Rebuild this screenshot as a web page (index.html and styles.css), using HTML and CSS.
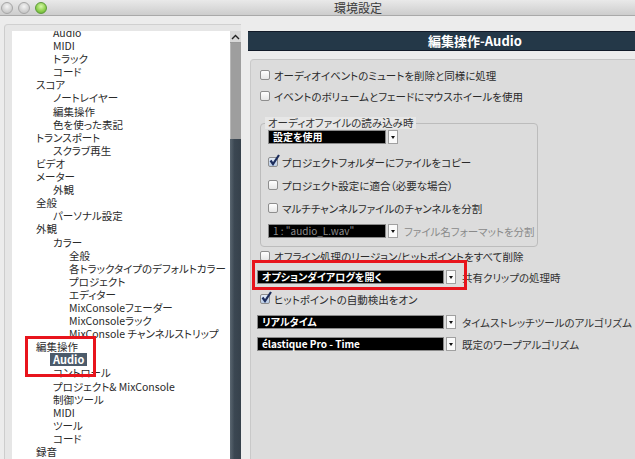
FILE: index.html
```html
<!DOCTYPE html>
<html lang="ja">
<head>
  <meta charset="UTF-8">
  <title>環境設定</title>
  <link rel="stylesheet" href="styles.css">
</head>
<body>

  <div class="window">
    <div class="titlebar">
      <div class="lights">
        <span class="light"></span>
        <span class="light"></span>
        <span class="light green"></span>
      </div>
      <div class="title">環境設定</div>
    </div>

    <div class="main">
      <div class="side">
        <ul class="tree">
          <li class="l1">Audio</li>
          <li class="l1">MIDI</li>
          <li class="l1">トラック</li>
          <li class="l1">コード</li>
          <li class="l0">スコア</li>
          <li class="l1">ノートレイヤー</li>
          <li class="l1">編集操作</li>
          <li class="l1">色を使った表記</li>
          <li class="l0">トランスポート</li>
          <li class="l1">スクラブ再生</li>
          <li class="l0">ビデオ</li>
          <li class="l0">メーター</li>
          <li class="l1">外観</li>
          <li class="l0">全般</li>
          <li class="l1">パーソナル設定</li>
          <li class="l0">外観</li>
          <li class="l1">カラー</li>
          <li class="l2">全般</li>
          <li class="l2">各トラックタイプのデフォルトカラー</li>
          <li class="l2">プロジェクト</li>
          <li class="l2">エディター</li>
          <li class="l2">MixConsoleフェーダー</li>
          <li class="l2">MixConsoleラック</li>
          <li class="l2">MixConsole チャンネルストリップ</li>
          <li class="l0">編集操作</li>
          <li class="l1"><span class="selected">Audio</span></li>
          <li class="l1">コントロール</li>
          <li class="l1">プロジェクト&amp; MixConsole</li>
          <li class="l1">制御ツール</li>
          <li class="l1">MIDI</li>
          <li class="l1">ツール</li>
          <li class="l1">コード</li>
          <li class="l0">録音</li>
        </ul>
        <div class="scrollbar">
          <div class="sb-up">
            <svg width="9" height="6" viewBox="0 0 9 6"><path d="M1 5 L4.5 1.5 L8 5" fill="none" stroke="#222" stroke-width="1.4"/></svg>
          </div>
          <div class="sb-thumb"></div>
          <div class="sb-track"></div>
        </div>
      </div>

      <div class="pane">
        <div class="pane-header">編集操作-Audio</div>
        <div class="panel">
          <div class="row check-row r-first">
            <span class="cb"></span>オーディオイベントのミュートを削除と同様に処理
          </div>
          <div class="row check-row r-second">
            <span class="cb"></span>イベントのボリュームとフェードにマウスホイールを使用
          </div>

          <div class="group">
            <div class="group-title">オーディオファイルの読み込み時</div>
            <div class="row select-row g-select">
              <div class="select small">設定を使用</div>
              <div class="drop"></div>
            </div>
            <div class="row check-row g-check1">
              <span class="cb checked"><svg width="13" height="13" viewBox="0 0 13 13"><path d="M2.5 6.5 L5 10 L11 1" fill="none" stroke="#1c2d5c" stroke-width="2.2"/></svg></span>プロジェクトフォルダーにファイルをコピー
            </div>
            <div class="row check-row g-check">
              <span class="cb"></span>プロジェクト設定に適合（必要な場合）
            </div>
            <div class="row check-row g-check">
              <span class="cb"></span>マルチチャンネルファイルのチャンネルを分割
            </div>
            <div class="row select-row g-select2">
              <div class="select small disabled">1 : "audio_L.wav"</div>
              <div class="drop"></div>
              <span class="select-label disabled-label">ファイル名フォーマットを分割</span>
            </div>
          </div>

          <div class="row check-row r-offline">
            <span class="cb"></span>オフライン処理のリージョン/ヒットポイントをすべて削除
          </div>
          <div class="row select-row r-select">
            <div class="select">オプションダイアログを開く</div>
            <div class="drop"></div>
            <span class="select-label">共有クリップの処理時</span>
          </div>
          <div class="row check-row r-hit">
            <span class="cb checked"><svg width="13" height="13" viewBox="0 0 13 13"><path d="M2.5 6.5 L5 10 L11 1" fill="none" stroke="#1c2d5c" stroke-width="2.2"/></svg></span>ヒットポイントの自動検出をオン
          </div>
          <div class="row select-row r-select2">
            <div class="select">リアルタイム</div>
            <div class="drop"></div>
            <span class="select-label">タイムストレッチツールのアルゴリズム</span>
          </div>
          <div class="row select-row r-select3">
            <div class="select">élastique Pro - Time</div>
            <div class="drop"></div>
            <span class="select-label">既定のワープアルゴリズム</span>
          </div>
        </div>
      </div>
    </div>

    <!-- 注目箇所の赤枠 -->
    <div class="mark mark-tree"></div>
    <div class="mark mark-clip"></div>
  </div>

</body>
</html>
```

FILE: styles.css
```css
body {
  margin: 0;
  padding: 0;
  font-family: "Noto Sans CJK JP", "Noto Sans", sans-serif;
  font-feature-settings: "palt";
  font-size: 10.5px;
  color: #2a2a2a;
  background: #ececec;
  overflow: hidden;
}

.window {
  position: relative;
  width: 635px;
  height: 459px;
  display: flex;
  flex-direction: column;
  overflow: hidden;
}

.titlebar {
  height: 15px;
  flex-shrink: 0;
  display: flex;
  align-items: center;
  background: linear-gradient(to bottom, #e9e9e9, #cdcdcd);
  border-bottom: 1px solid #a9a9a9;
}

.lights {
  display: flex;
  gap: 5px;
  padding-left: 1px;
}

.light {
  width: 12px;
  height: 12px;
  border-radius: 50%;
  box-sizing: border-box;
  border: 1px solid #a6a6a6;
  background: radial-gradient(circle at 50% 35%, #f4f4f4 0%, #d0d0d0 60%, #bcbcbc 100%);
}

.light.green {
  border-color: #5d9a3a;
  background: radial-gradient(circle at 50% 35%, #d6f7a8 0%, #8fd14f 55%, #5ea62c 100%);
}

.title {
  margin-left: 287px;
  font-size: 12px;
  color: #3a3a3a;
  line-height: 15px;
}

.main {
  flex: 1;
  display: flex;
  min-height: 0;
}

.side {
  margin: 8px 0 0 4px;
  padding: 6px 0 0 7px;
  display: flex;
  border-top: 1px solid #d0d0d0;
  border-left: 1px solid #cdcdcd;
  border-radius: 4px 0 0 0;
  background: #e6e6e6;
}

.tree {
  list-style: none;
  margin: 0;
  padding: 0;
  width: 218px;
  background: #fff;
  overflow: hidden;
}

.tree li {
  height: 13.1px;
  line-height: 13.1px;
  white-space: nowrap;
}

.tree li:first-child {
  margin-top: -5px;
}

.tree .l0 { padding-left: 24px; }
.tree .l1 { padding-left: 41px; }
.tree .l2 { padding-left: 57px; }

.tree .selected {
  display: inline-block;
  margin-left: -3px;
  padding: 0 3px;
  line-height: 13px;
  background: #4c5b6b;
  color: #fff;
  font-weight: bold;
  font-size: 11px;
}

.scrollbar {
  width: 11px;
  display: flex;
  flex-direction: column;
}

.sb-up {
  height: 11px;
  display: flex;
  align-items: center;
  justify-content: center;
  background: #d8d8d8;
  border-bottom: 1px solid #9a9a9a;
}

.sb-thumb {
  height: 96px;
  background: #9e9e9e;
  border-left: 1px solid #b8b8b8;
}

.sb-track {
  flex: 1;
  background: linear-gradient(to right, #5a6670, #3b4752 40%, #36414b);
}

.pane {
  flex: 1;
  margin: 15px 0 0 7px;
  display: flex;
  flex-direction: column;
  min-width: 0;
}

.pane-header {
  height: 18px;
  line-height: 18px;
  padding-left: 180px;
  background: #243848;
  border-top: 1px solid #111a28;
  border-bottom: 1px solid #111a28;
  color: #fff;
  font-weight: bold;
  font-size: 13px;
  white-space: nowrap;
}

.panel {
  flex: 1;
  margin: 8px 0 0 2px;
  padding: 0 0 0 9px;
  background: #dcdcdc;
  border-top: 1px solid #c6c6c6;
  border-left: 1px solid #c9c9c9;
  border-radius: 4px 0 0 0;
  display: flex;
  flex-direction: column;
  align-items: flex-start;
}

.row {
  display: flex;
  align-items: center;
  white-space: nowrap;
}

.check-row {
  height: 16px;
}

.cb {
  position: relative;
  width: 10px;
  height: 10px;
  margin-right: 4px;
  flex-shrink: 0;
  box-sizing: border-box;
  border: 1px solid #8e8e8e;
  border-radius: 2px;
  background: linear-gradient(to bottom, #ffffff, #e6e6e6);
}

.cb.checked {
  background: linear-gradient(to bottom, #e4ecf7, #b9cce6);
}

.cb svg {
  position: absolute;
  left: -1px;
  top: -4px;
}

.r-first { margin-top: 7px; }
.r-second { margin-top: 5px; }

.group {
  margin-top: 19px;
  width: 278px;
  box-sizing: border-box;
  padding: 0 0 8px 7px;
  border: 1px solid #bcbcbc;
  border-radius: 4px;
  display: flex;
  flex-direction: column;
  align-items: flex-start;
}

.group-title {
  margin: -7px 0 0 -3px;
  padding: 0 3px;
  height: 12px;
  line-height: 12px;
  background: #e7e7e7;
  color: #333;
}

.select-row {
  height: 14px;
}

.select {
  height: 14px;
  box-sizing: border-box;
  width: 187px;
  padding-left: 4px;
  line-height: 12px;
  background: #000;
  border: 1px solid #8a8a8a;
  color: #fff;
  font-weight: bold;
  font-size: 10px;
}

.select.small {
  width: 118px;
}

.select.disabled {
  color: #8c8c8c;
  font-weight: normal;
}

.drop {
  position: relative;
  width: 10px;
  height: 14px;
  margin-left: 2px;
  box-sizing: border-box;
  border: 1px solid #a0a0a0;
  background: #fafafa;
}

.drop::after {
  content: "";
  position: absolute;
  left: 2px;
  top: 5px;
  border-left: 2.5px solid transparent;
  border-right: 2.5px solid transparent;
  border-top: 3px solid #111;
}

.select-label {
  margin-left: 6px;
  color: #333;
}

.disabled-label {
  color: #8a8a8a;
}

.g-select { margin-top: 1px; }
.g-check1 { margin-top: 10px; }
.g-check { margin-top: 7px; }
.g-select2 { margin-top: 8px; }

.r-offline { margin-top: 1px; }
.r-select { margin: 6px 0 0 -3px; }
.r-hit { margin-top: 7px; }
.r-select2 { margin: 8px 0 0 -3px; }
.r-select3 { margin: 8px 0 0 -3px; }

.mark {
  position: absolute;
  box-sizing: border-box;
  border: 3px solid #e8141c;
}

.mark-tree {
  left: 25px;
  top: 336px;
  width: 71px;
  height: 41px;
}

.mark-clip {
  left: 252px;
  top: 260px;
  width: 215px;
  height: 30px;
}
```
